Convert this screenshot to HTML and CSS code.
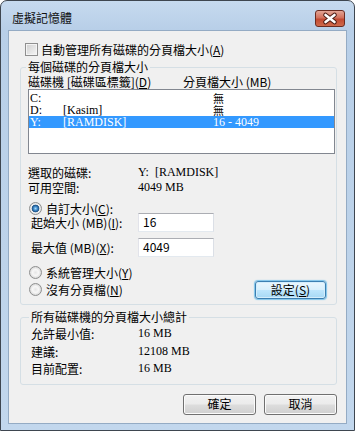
FILE: index.html
```html
<!DOCTYPE html>
<html>
<head>
  <title>虛擬記憶體</title>
  <link rel="stylesheet" href="styles.css">
</head>
<body>
  <div class="window">
    <div class="titlebar">
      <span class="title">虛擬記憶體</span>
      <div class="close">
        <svg width="30" height="17" viewBox="0 0 30 17">
          <path d="M10.5 5 L19.5 12 M19.5 5 L10.5 12" stroke="#4a1a12" stroke-width="4.6" stroke-linecap="round"/>
          <path d="M10.5 5 L19.5 12 M19.5 5 L10.5 12" stroke="#ffffff" stroke-width="2.6" stroke-linecap="round"/>
        </svg>
      </div>
    </div>

    <div class="client">
      <label class="check-row">
        <span class="checkbox"></span>
        <span>自動管理所有磁碟的分頁檔大小(<u>A</u>)</span>
      </label>

      <fieldset class="group group-drives">
        <legend>每個磁碟的分頁檔大小</legend>
        <div class="list-head">
          <span>磁碟機 [磁碟區標籤](<u>D</u>)</span>
          <span class="head-size">分頁檔大小 (MB)</span>
        </div>
        <div class="listbox">
          <div class="drive"><span>C:</span><span></span><span class="none">無</span></div>
          <div class="drive"><span>D:</span><span>[Kasim]</span><span class="none">無</span></div>
          <div class="drive selected"><span>Y:</span><span>[RAMDISK]</span><span>16 - 4049</span></div>
        </div>

        <div class="info">
          <div class="info-row"><span class="info-label">選取的磁碟:</span><span class="serif">Y:&nbsp; [RAMDISK]</span></div>
          <div class="info-row"><span class="info-label">可用空間:</span><span class="serif">4049 MB</span></div>
        </div>

        <label class="radio-row first">
          <span class="radio checked"></span>
          <span>自訂大小(<u>C</u>):</span>
        </label>
        <div class="field-row">
          <span class="field-label">起始大小 (MB)(<u>I</u>):</span>
          <div class="textbox">16</div>
        </div>
        <div class="field-row second">
          <span class="field-label">最大值 (MB)(<u>X</u>):</span>
          <div class="textbox">4049</div>
        </div>
        <label class="radio-row system">
          <span class="radio"></span>
          <span>系統管理大小(<u>Y</u>)</span>
        </label>
        <div class="last-row">
          <label class="radio-row">
            <span class="radio"></span>
            <span>沒有分頁檔(<u>N</u>)</span>
          </label>
          <button class="btn btn-focus set-btn">設定(<u>S</u>)</button>
        </div>
      </fieldset>

      <fieldset class="group group-total">
        <legend>所有磁碟機的分頁檔大小總計</legend>
        <div class="total-row"><span class="total-label">允許最小值:</span><span class="serif">16 MB</span></div>
        <div class="total-row"><span class="total-label">建議:</span><span class="serif">12108 MB</span></div>
        <div class="total-row"><span class="total-label">目前配置:</span><span class="serif">16 MB</span></div>
      </fieldset>

      <div class="buttons">
        <button class="btn">確定</button>
        <button class="btn">取消</button>
      </div>
    </div>
  </div>
</body>
</html>
```

FILE: styles.css
```css
body { margin: 0; background: #ffffff; font-family: "Noto Sans CJK TC", "Noto Sans", sans-serif; font-size: 12px; color: #000; }
u { text-decoration: underline; text-underline-offset: 1px; }

.window { box-sizing: border-box; width: 355px; height: 431px; border: 1px solid #3e4650; border-radius: 7px 7px 0 0; padding: 0 7px; background: linear-gradient(#c6daef, #b8cfe8 28px, #bdd3ea 60%, #c2d7ed); }
.titlebar { display: flex; align-items: flex-start; height: 29px; }
.title { margin: 10px 0 0 4px; line-height: 14px; color: #111; }
.close { margin: 9px 2px 0 auto; width: 30px; height: 17px; box-sizing: border-box; border: 1px solid #6b2b20; border-radius: 3px; background: linear-gradient(#e3a595, #d2705c 45%, #c24a32 55%, #cf6a4c); display: flex; align-items: center; justify-content: center; }
.close svg { display: block; margin: -1px; }

.client { box-sizing: border-box; height: 394px; border: 1px solid #94abc4; background: #f0f0f0; }

.check-row { display: flex; align-items: center; gap: 3px; margin: 11px 0 0 16px; height: 15px; line-height: 15px; }
.checkbox { width: 11px; height: 11px; border: 1px solid #8f8f8f; background: linear-gradient(135deg, #cfcfcf, #f6f6f6); box-shadow: inset 0 0 0 1px #f4f4f4; }

.group { margin: 4px 0 0 11px; width: 317px; box-sizing: border-box; border: 1px solid #d5dfe5; border-radius: 3px; padding: 0 1px 0 7px; }
.group legend { padding: 0 2px; margin-left: -2px; line-height: 12px; }
.group-drives { padding-bottom: 5px; }
.group-total { margin-top: 6px; padding: 2px 1px 6px 10px; }

.list-head { display: flex; margin-top: 3px; line-height: 12px; }
.head-size { margin-left: auto; width: 152px; }

.listbox { margin-top: 1px; width: 307px; height: 65px; box-sizing: border-box; border: 1px solid #828790; background: #fff; padding: 2px 0 0; font-family: "Liberation Serif", "Noto Sans CJK TC", serif; }
.drive { display: grid; grid-template-columns: 33px 150px 1fr; height: 12px; line-height: 12px; padding-left: 1px; }
.drive .none { font-family: "Noto Sans CJK TC", sans-serif; font-size: 11px; }
.drive.selected { background: #3399ff; color: #fff; }

.serif { font-family: "Liberation Serif", "Noto Sans CJK TC", serif; }
.info { margin-top: 11px; }
.info-row { display: flex; line-height: 15px; }
.info-label { width: 110px; }

.radio-row { display: flex; align-items: center; gap: 4px; line-height: 12px; margin-left: 1px; }
.radio-row.first { margin-top: 7px; }
.radio-row.system { margin-top: 9px; }
.radio { width: 11px; height: 11px; border: 1px solid #8e8f8f; border-radius: 50%; background: radial-gradient(circle, #e6e6e6 0, #f7f7f7 3px, #d6d6d6 6px); }
.radio.checked { background: radial-gradient(circle, #a9dcfb 0, #3d87c7 2px, #1c4f82 3.5px, #f4f4f4 4.2px, #d8d8d8 6px); }

.field-row { display: flex; align-items: center; height: 19px; margin-top: -2px; }
.field-row.second { margin-top: 6px; }
.field-label { width: 107px; padding-left: 3px; line-height: 12px; }
.textbox { box-sizing: border-box; width: 76px; height: 19px; border: 1px solid #abadb3; border-color: #abadb3 #dbdfe6 #e3e9ef #e2e3ea; background: #fff; padding: 0 4px; line-height: 16px; }

.last-row { display: flex; align-items: center; justify-content: space-between; margin-top: 1px; height: 19px; padding-right: 9px; }

.btn { box-sizing: border-box; width: 73px; height: 21px; padding: 0; border: 1px solid #707070; border-radius: 3px; font-family: "Noto Sans CJK TC", sans-serif; font-size: 12px; line-height: 16px; color: #000; background: linear-gradient(#f2f2f2, #ebebeb 48%, #dddddd 52%, #cfcfcf); box-shadow: inset 0 0 0 1px #fbfbfb; }
.btn-focus { border-color: #3c7fb1; background: linear-gradient(#eaf6fd, #d9f0fc 48%, #bee6fd 52%, #a7d9f5); box-shadow: inset 0 0 0 1px #d4eefc, 0 0 1px 1px #7ec4ea; }
.set-btn { width: 71px; height: 18px; line-height: 14px; }

.total-row { display: flex; line-height: 17.5px; }
.total-label { width: 107px; }

.buttons { display: flex; gap: 8px; justify-content: flex-end; margin: 9px 9px 0 0; }
```
